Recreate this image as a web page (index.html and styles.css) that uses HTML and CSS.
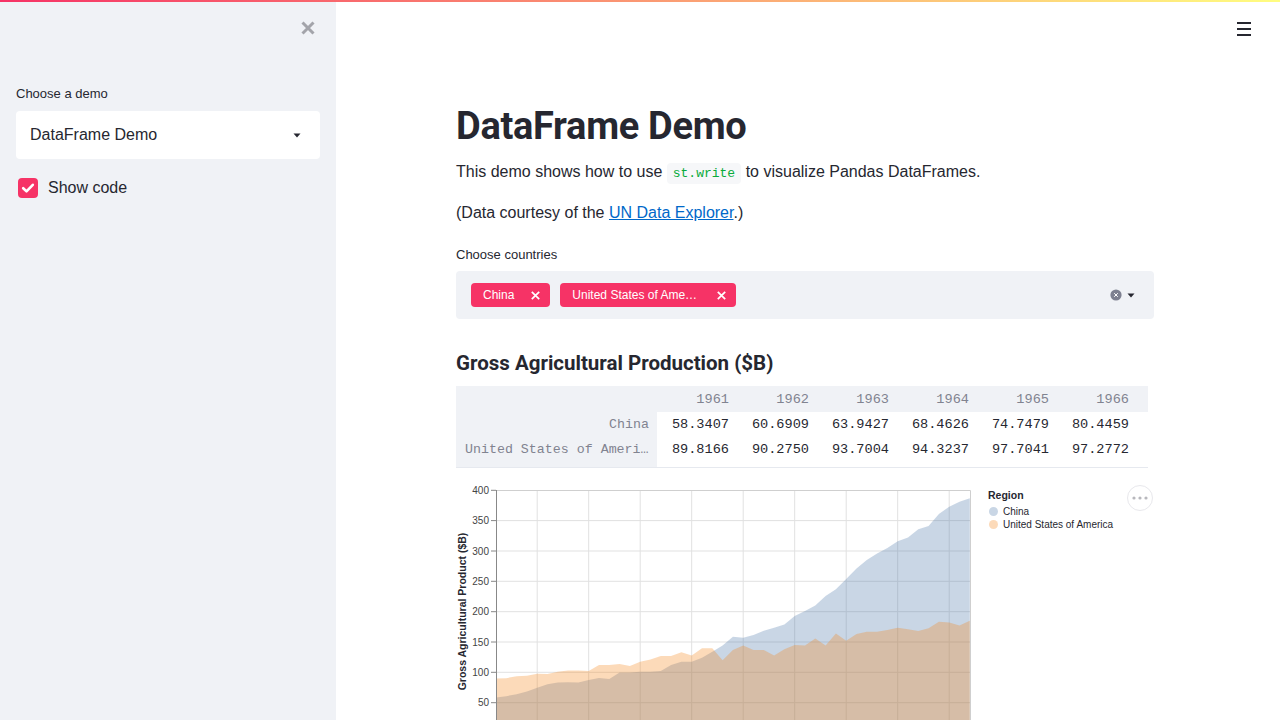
FILE: index.html
```html
<!DOCTYPE html>
<html lang="en">
<head>
<meta charset="utf-8">
<title>DataFrame Demo</title>
<link rel="stylesheet" href="styles.css">
</head>
<body>
<div class="decor"></div>
<div class="app">
  <aside class="sidebar">
    <div class="sb-close">
      <svg width="14" height="14" viewBox="0 0 14 14"><path d="M1.5 1.5 L12.5 12.5 M12.5 1.5 L1.5 12.5" stroke="#a3a4aa" stroke-width="3" stroke-linecap="butt" fill="none"/></svg>
    </div>
    <div class="sb-label">Choose a demo</div>
    <div class="select">
      <span>DataFrame Demo</span>
      <svg width="8" height="5" viewBox="0 0 8 5"><path d="M0.5 0.5 H7.5 L4 4.5 Z" fill="#262730"/></svg>
    </div>
    <div class="check">
      <span class="box"><svg width="20" height="20" viewBox="0 0 20 20"><path d="M5.2 10.2 L8.5 13.4 L14.8 6.8" stroke="#fff" stroke-width="2.6" fill="none" stroke-linecap="round" stroke-linejoin="round"/></svg></span>
      <span>Show code</span>
    </div>
  </aside>
  <main class="main">
    <header class="main-head">
      <svg width="14" height="14" viewBox="0 0 14 14"><path d="M0 1h14M0 7h14M0 13h14" stroke="#262730" stroke-width="2" fill="none"/></svg>
    </header>
    <div class="block">
      <h1 class="title">DataFrame Demo</h1>
      <p class="text first">This demo shows how to use <code class="code">st.write</code> to visualize Pandas DataFrames.</p>
      <p class="text second">(Data courtesy of the <a class="link" href="#">UN Data Explorer</a>.)</p>
      <div class="label">Choose countries</div>
      <div class="multi">
        <div class="tags">
          <span class="tag"><span class="tag-t">China</span><svg class="tag-x" width="9" height="9" viewBox="0 0 9 9"><path d="M0.8 0.8 L8.2 8.2 M8.2 0.8 L0.8 8.2" stroke="#fff" stroke-width="1.7"/></svg></span>
          <span class="tag"><span class="tag-t long">United States of America</span><svg class="tag-x" width="9" height="9" viewBox="0 0 9 9"><path d="M0.8 0.8 L8.2 8.2 M8.2 0.8 L0.8 8.2" stroke="#fff" stroke-width="1.7"/></svg></span>
        </div>
        <div class="ctrls">
          <svg width="12" height="12" viewBox="0 0 12 12"><circle cx="6" cy="6" r="5.6" fill="#7d8090"/><path d="M4.2 4.2 L7.8 7.8 M7.8 4.2 L4.2 7.8" stroke="#fff" stroke-width="1"/></svg>
          <svg width="8" height="5" viewBox="0 0 8 5"><path d="M0.5 0.5 H7.5 L4 4.5 Z" fill="#262730"/></svg>
        </div>
      </div>
      <h2 class="subtitle">Gross Agricultural Production ($B)</h2>
      <div class="df">
        <div class="c h ix"></div>
        <div class="c h">1961</div><div class="c h">1962</div><div class="c h">1963</div><div class="c h">1964</div><div class="c h">1965</div><div class="c h">1966</div><div class="c h"></div>

        <div class="c ix">China</div>
        <div class="c d">58.3407</div><div class="c d">60.6909</div><div class="c d">63.9427</div><div class="c d">68.4626</div><div class="c d">74.7479</div><div class="c d">80.4459</div><div class="c d"></div>

        <div class="c ix">United States of America</div>
        <div class="c d">89.8166</div><div class="c d">90.2750</div><div class="c d">93.7004</div><div class="c d">94.3237</div><div class="c d">97.7041</div><div class="c d">97.2772</div><div class="c d"></div>

        <div class="c ix pad"></div>
        <div class="c d pad span"></div>
      </div>
      <div class="chart">
        <svg class="chart-svg" width="698" height="300" viewBox="456 484 698 300">
          <g stroke="#e1e1e1" stroke-width="1">
            <path d="M496 520.6H970M496 551H970M496 581.3H970M496 611.7H970M496 642H970M496 672.3H970M496 702.7H970"/>
            <path d="M537.2 490V733M588.7 490V733M640.2 490V733M691.7 490V733M743.2 490V733M794.7 490V733M846.2 490V733M897.7 490V733M949.2 490V733"/>
          </g>
          <polygon fill="#4c78a8" fill-opacity="0.3" points="496,733 496,697.6 506.3,696.2 516.6,694.2 526.9,691.4 537.2,687.7 547.5,684.2 557.8,682.6 568.1,682.3 578.4,682.6 588.7,679.9 599,678.1 609.3,679 619.6,672.6 629.9,672.6 640.2,671.7 650.5,671.7 660.8,671.1 671.1,665 681.4,661.7 691.7,661.7 702,657.8 712.3,651.7 722.6,645.6 732.9,636.7 743.2,637.7 753.5,635 763.8,630.7 774.1,627.7 784.4,624.4 794.7,615.9 805,611 815.3,605.6 825.6,595.9 835.9,589.2 846.2,578.9 856.5,568.6 866.8,560.1 877.1,553.4 887.4,548 897.7,541.3 908,537.6 918.3,529.2 928.6,526.1 938.9,514 949.2,506.7 959.5,501.8 969.8,498.2 969.8,733"/>
          <polygon fill="#f58518" fill-opacity="0.3" points="496,733 496,678.5 506.3,678.2 516.6,676.2 526.9,675.8 537.2,673.7 547.5,674 557.8,671.7 568.1,670.5 578.4,670.5 588.7,671.1 599,665 609.3,665 619.6,664 629.9,666 640.2,661.7 650.5,659.6 660.8,656 671.1,656 681.4,652.3 691.7,655.6 702,648.3 712.3,648.3 722.6,660.2 732.9,649.9 743.2,645.6 753.5,649.9 763.8,649.9 774.1,655.6 784.4,649.3 794.7,645 805,645.6 815.3,638.4 825.6,645.6 835.9,633.5 846.2,640.8 856.5,634.1 866.8,631.7 877.1,631.7 887.4,630 897.7,627.7 908,629.3 918.3,631.1 928.6,628.3 938.9,621.7 949.2,622.6 959.5,625.6 969.8,620.8 969.8,733"/>
          <path d="M496.5 490.5H970.5V733" stroke="#cfcfcf" fill="none"/>
          <path d="M496.5 490V733" stroke="#888" fill="none"/>
          <g stroke="#888">
            <path d="M491 490.3H496M491 520.6H496M491 551H496M491 581.3H496M491 611.7H496M491 642H496M491 672.3H496M491 702.7H496"/>
          </g>
          <g class="ticks" text-anchor="end">
            <text x="489" y="494">400</text>
            <text x="489" y="524.3">350</text>
            <text x="489" y="554.7">300</text>
            <text x="489" y="585">250</text>
            <text x="489" y="615.4">200</text>
            <text x="489" y="645.7">150</text>
            <text x="489" y="676">100</text>
            <text x="489" y="706.4">50</text>
          </g>
          <text class="ytitle" transform="translate(466 611.5) rotate(-90)" text-anchor="middle">Gross Agricultural Product ($B)</text>
          <text class="lg-title" x="988" y="499">Region</text>
          <circle cx="993.5" cy="511.5" r="4.5" fill="#4c78a8" fill-opacity="0.3"/>
          <circle cx="993.5" cy="524.5" r="4.5" fill="#f58518" fill-opacity="0.3"/>
          <text class="lg" x="1003" y="515">China</text>
          <text class="lg" x="1003" y="528">United States of America</text>
        </svg>
        <div class="more">
          <svg width="16" height="4" viewBox="0 0 16 4"><circle cx="2" cy="2" r="1.6" fill="#b8b8bd"/><circle cx="8" cy="2" r="1.6" fill="#b8b8bd"/><circle cx="14" cy="2" r="1.6" fill="#b8b8bd"/></svg>
        </div>
      </div>
    </div>
  </main>
</div>
</body>
</html>
```

FILE: styles.css
```css
* { box-sizing: border-box; }
html, body { margin: 0; padding: 0; }
body {
  height: 720px;
  overflow: hidden;
  display: flex;
  flex-direction: column;
  font-family: "Liberation Sans", Arial, sans-serif;
  color: #262730;
  background: #ffffff;
}
.decor {
  flex: none;
  height: 2px;
  background: linear-gradient(90deg, #f63366, #fffd80);
}
.app {
  flex: 1;
  display: flex;
  min-height: 0;
}

/* Sidebar */
.sidebar {
  flex: none;
  width: 336px;
  background: #f0f2f6;
  padding: 0 16px;
}
.sb-close {
  height: 54px;
  display: flex;
  justify-content: flex-end;
  align-items: flex-start;
  padding: 19px 5px 0 0;
}
.sb-label {
  margin-top: 29px;
  font-size: 13px;
  line-height: 18px;
}
.select {
  margin-top: 8px;
  height: 48px;
  background: #ffffff;
  border-radius: 4px;
  display: flex;
  align-items: center;
  justify-content: space-between;
  padding: 0 19px 0 14px;
  font-size: 16px;
}
.check {
  margin-top: 19px;
  height: 20px;
  display: flex;
  align-items: center;
  gap: 10px;
  padding-left: 2px;
  font-size: 16px;
}
.box {
  width: 20px;
  height: 20px;
  border-radius: 4px;
  background: #f63366;
  display: flex;
}

/* Main */
.main {
  flex: 1;
  min-width: 0;
  display: flex;
  flex-direction: column;
}
.main-head {
  flex: none;
  height: 60px;
  display: flex;
  justify-content: flex-end;
  padding: 20px 29px 0 0;
}
.block {
  width: 698px;
  margin-left: 120px;
  padding-top: 40px;
}
.title {
  margin: 0;
  font-family: Roboto, "Liberation Sans", sans-serif;
  font-weight: 700;
  font-size: 38px;
  letter-spacing: -0.3px;
  line-height: 48px;
  color: #262730;
}
.text {
  margin: 0;
  font-size: 16px;
  line-height: 24px;
}
.text.first { margin-top: 10px; }
.text.second { margin-top: 15px; }
.code {
  font-family: "Liberation Mono", monospace;
  font-size: 13px;
  color: #09ab3b;
  background: #f6f7f9;
  padding: 3px 6px;
  border-radius: 4px;
}
.link { color: #0068c9; text-decoration: underline; }
.label {
  margin-top: 21px;
  font-size: 13px;
  line-height: 18px;
}
.multi {
  margin-top: 7px;
  height: 48px;
  background: #f0f2f6;
  border-radius: 4px;
  display: flex;
  align-items: center;
  justify-content: space-between;
  padding: 0 19px 0 15px;
}
.tags { display: flex; gap: 10px; }
.tag {
  height: 24px;
  background: #f63366;
  color: #ffffff;
  border-radius: 4px;
  display: flex;
  align-items: center;
  padding: 0 10px 0 12px;
  font-size: 12px;
}
.tag-t { white-space: nowrap; }
.tag-t.long {
  width: 128px;
  overflow: hidden;
  text-overflow: ellipsis;
}
.tag-x { margin-left: 17px; flex: none; }
.ctrls { display: flex; align-items: center; gap: 5px; }

.subtitle {
  margin: 30px 0 0;
  font-family: Roboto, "Liberation Sans", sans-serif;
  font-weight: 700;
  font-size: 20.5px;
  line-height: 28px;
}

/* DataFrame */
.df {
  margin-top: 9px;
  width: 692px;
  display: grid;
  grid-template-columns: 201px repeat(6, 80px) 11px;
  grid-template-rows: 26px 25px 25px 5px;
  font-family: "Liberation Mono", monospace;
  font-size: 13.6px;
  border-bottom: 1px solid #e6e9ef;
  border-right: 1px solid #e6e9ef;
}
.c {
  display: flex;
  align-items: center;
  justify-content: flex-end;
  padding-right: 8px;
  white-space: nowrap;
  overflow: hidden;
}
.h { background: #f0f2f6; color: #818390; }
.ix {
  background: #f0f2f6;
  color: #818390;
  font-size: 13.3px;
  padding-left: 9px;
  display: block;
  line-height: 25px;
  text-align: right;
  text-overflow: ellipsis;
}
.h.ix { line-height: 26px; }
.d { background: #ffffff; color: #262730; }
.pad { padding: 0; }
.span { grid-column: 2 / -1; }

/* Chart */
.chart {
  margin-top: 16px;
  position: relative;
  height: 300px;
}
.chart-svg { display: block; }
.ticks text {
  font-family: "Liberation Sans", Arial, sans-serif;
  font-size: 10px;
  fill: #444;
}
.ytitle {
  font-family: "Liberation Sans", Arial, sans-serif;
  font-size: 10.5px;
  font-weight: 700;
  fill: #262730;
}
.lg-title {
  font-family: "Liberation Sans", Arial, sans-serif;
  font-size: 10.5px;
  font-weight: 700;
  fill: #262730;
}
.lg {
  font-family: "Liberation Sans", Arial, sans-serif;
  font-size: 10px;
  fill: #262730;
}
.more {
  position: absolute;
  left: 671px;
  top: 1px;
  width: 26px;
  height: 26px;
  border-radius: 50%;
  border: 1px solid #e8e8ec;
  background: #fff;
  display: flex;
  align-items: center;
  justify-content: center;
}
```
